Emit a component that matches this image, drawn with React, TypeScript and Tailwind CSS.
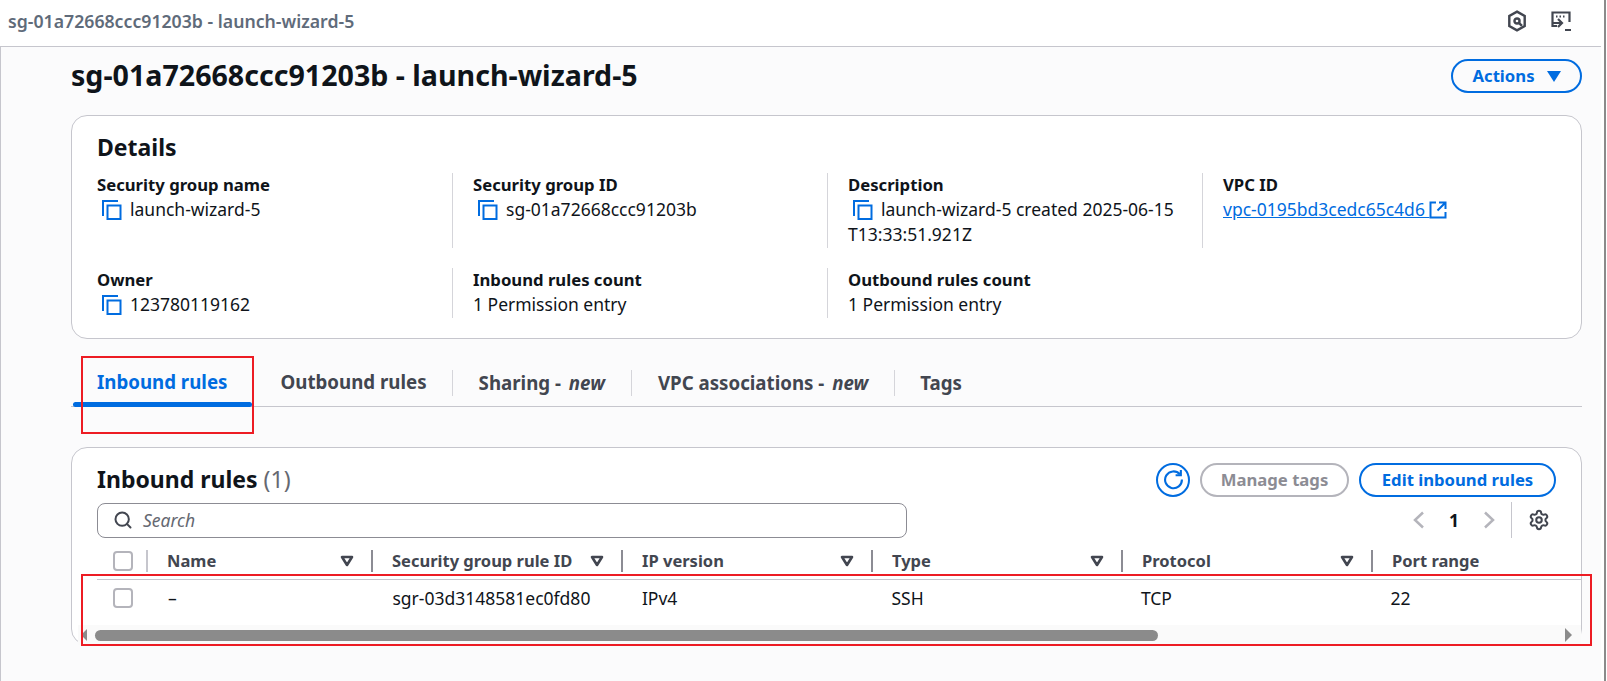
import { Search, Settings } from 'lucide-react';

const COLUMNS = [
  { label: 'Name', value: '–', width: 'w-[225px]', sort: true, divider: 'border-[#c6c6cd]' },
  { label: 'Security group rule ID', value: 'sgr-03d3148581ec0fd80', width: 'w-[250px]', sort: true, divider: 'border-[#8c8c94]' },
  { label: 'IP version', value: 'IPv4', width: 'w-[250px]', sort: true, divider: 'border-[#8c8c94]' },
  { label: 'Type', value: 'SSH', width: 'w-[250px]', sort: true, divider: 'border-[#8c8c94]' },
  { label: 'Protocol', value: 'TCP', width: 'w-[250px]', sort: true, divider: 'border-[#8c8c94]' },
  { label: 'Port range', value: '22', width: 'w-[188px]', sort: false, divider: 'border-[#8c8c94]' },
];

function CopyIcon() {
  return (
    <svg width="20" height="20" viewBox="0 0 20 20" fill="none" stroke="#006ce0" strokeWidth="2" className="shrink-0">
      <path d="M1 16V1h15" />
      <rect x="5.5" y="5.5" width="13" height="13.5" />
    </svg>
  );
}

function ExternalIcon() {
  return (
    <svg width="18" height="18" viewBox="0 0 18 18" fill="none" stroke="#006ce0" strokeWidth="2" className="shrink-0">
      <path d="M7 1.500H1.500v15h15V11" />
      <path d="M10 1.500h6.500V8M16 2L8.500 9.500" />
    </svg>
  );
}

function Caret() {
  return (
    <svg width="14" height="12" viewBox="0 0 14 12" fill="none" stroke="#424650" strokeWidth="2.600" className="shrink-0">
      <path d="M2 2h10L7 10z" strokeLinejoin="round" />
    </svg>
  );
}

function Chevron({ flip }: { flip?: boolean }) {
  return (
    <svg width="22" height="22" viewBox="0 0 22 22" fill="none" stroke="#b4b4bb" strokeWidth="2.500" className="shrink-0">
      <path d={flip ? 'M7 3.500l8 7.500-8 7.500' : 'M15 3.500L7 11l8 7.500'} />
    </svg>
  );
}

function Field({ label, first, children }: { label: string; first?: boolean; children: React.ReactNode }) {
  return (
    <div className={first ? 'pb-px pr-5' : 'border-l border-[#d5d5da] pb-px pl-5 pr-5'}>
      <div className="text-[16.700px] font-bold leading-[23px] text-[#0f141a]">{label}</div>
      <div className="pt-px leading-[25px] text-[#0f141a]">{children}</div>
    </div>
  );
}

function CopyValue({ text }: { text: string }) {
  return (
    <span className="flex items-center gap-2 pl-[5px]">
      <CopyIcon />
      <span className="whitespace-nowrap">{text}</span>
    </span>
  );
}

export default function App() {
  return (
    <div className="relative h-[681px] w-[1607px] overflow-hidden bg-white font-['Noto_Sans',sans-serif] text-[17.500px]">
      <div className="flex h-[46px] items-center justify-between pb-1 pl-2 pr-[35px]">
        <span className="text-[17.700px] font-semibold text-[#5f6b7a]">sg-01a72668ccc91203b - launch-wizard-5</span>
        <div className="flex items-center gap-6 text-[#424650]">
          <svg width="20" height="22" viewBox="0 0 18 20" fill="none" stroke="currentColor" strokeWidth="2.200">
            <path d="M9 1.500l7 4v9l-7 4-7-4v-9z" />
            <circle cx="9" cy="10" r="2.300" />
            <path d="M10.500 11.500l3 3" />
          </svg>
          <svg width="21" height="21" viewBox="0 0 21 21" fill="none" stroke="currentColor" strokeWidth="2.200">
            <path d="M6 15H1.500V1.500h17V11" />
            <path d="M5 5.500h1.500M8.500 5.500h1.500M12 5.500h1.500" />
            <path d="M7 8l4 4-4 4M2 12h8M14 19h6" />
          </svg>
        </div>
      </div>

      <div className="mr-[6px] h-[635px] border-l border-t border-[#c6c6cd] bg-[#fbfbfc] pl-[70px] pr-[19px]">
        <div className="flex h-[68px] items-start justify-between pt-3">
          <h1 className="text-[28.600px] font-bold leading-[32px] text-[#0f141a]">sg-01a72668ccc91203b - launch-wizard-5</h1>
          <button className="flex h-[34px] w-[131px] items-center justify-center gap-3 rounded-full border-2 border-[#006ce0] text-[16.700px] font-bold text-[#006ce0]">
            Actions
            <svg width="14" height="11" viewBox="0 0 14 11" fill="#006ce0"><path d="M0 0h14L7 11z" /></svg>
          </button>
        </div>

        <section className="h-[224px] rounded-2xl border border-[#c6c6cd] bg-white pl-[25px] pt-4">
          <h2 className="mb-[11px] text-[23px] font-bold leading-[30px] text-[#0f141a]">Details</h2>
          <div className="grid grid-cols-[355px_375px_375px_1fr] gap-y-5">
            <Field label="Security group name" first><CopyValue text="launch-wizard-5" /></Field>
            <Field label="Security group ID"><CopyValue text="sg-01a72668ccc91203b" /></Field>
            <Field label="Description">
              <CopyValue text="launch-wizard-5 created 2025-06-15" />
              T13:33:51.921Z
            </Field>
            <Field label="VPC ID">
              <span className="flex items-center">
                <a className="whitespace-pre text-[#006ce0] underline">vpc-0195bd3cedc65c4d6 </a>
                <ExternalIcon />
              </span>
            </Field>
            <Field label="Owner" first><CopyValue text="123780119162" /></Field>
            <Field label="Inbound rules count">1 Permission entry</Field>
            <Field label="Outbound rules count">1 Permission entry</Field>
          </div>
        </section>

        <nav className="mt-[18px] flex h-[50px] items-center border-b border-[#c6c6cd] pt-[2px] text-[18.700px] font-bold text-[#424650]">
          <div className="relative flex h-full items-center px-[26px] text-[#006ce0]">
            Inbound rules
            <div className="absolute bottom-[-1px] left-[2px] h-[5px] w-[179px] rounded bg-[#006ce0]" />
          </div>
          <div className="pl-[27px] pr-[25px]">Outbound rules</div>
          <div className="border-l border-[#d5d5da] px-[26px] leading-[26px]">Sharing - <em className="ml-[3px]">new</em></div>
          <div className="border-l border-[#d5d5da] px-[26px] leading-[26px]">VPC associations - <em className="ml-[3px]">new</em></div>
          <div className="border-l border-[#d5d5da] px-[25px] leading-[26px]">Tags</div>
        </nav>

        <section className="relative mt-10 h-[198px] rounded-2xl border border-[#c6c6cd] bg-white px-[25px] pt-[14px]">
          <div className="flex h-[35px] items-center justify-between">
            <h2 className="text-[23px] font-bold text-[#0f141a]">Inbound rules <span className="font-normal text-[#656871]">(1)</span></h2>
            <div className="flex items-center gap-[10px]">
              <button className="flex size-[34px] items-center justify-center rounded-full border-2 border-[#006ce0]">
                <svg width="21" height="21" viewBox="0 0 20 20" fill="none" stroke="#006ce0" strokeWidth="2">
                  <path d="M16 5a8 8 0 1 0 2 5" />
                  <path d="M17 1v5h-5" />
                </svg>
              </button>
              <button className="h-[34px] w-[149px] rounded-full border-2 border-[#b4b4bb] text-[16.700px] font-bold text-[#8c8c94]">Manage tags</button>
              <button className="h-[34px] w-[197px] rounded-full border-2 border-[#006ce0] text-[16.700px] font-bold text-[#006ce0]">Edit inbound rules</button>
            </div>
          </div>
          <div className="mt-[5px] flex h-[36px] items-center justify-between">
            <div className="flex h-[35px] w-[810px] items-center gap-[10px] rounded-lg border border-[#8c8c94] bg-white pl-[15px]">
              <Search size={20} strokeWidth={2.400} className="text-[#424650]" />
              <span className="italic text-[#656871]">Search</span>
            </div>
            <div className="flex h-full items-center pr-[6px]">
              <Chevron />
              <span className="w-12 text-center font-bold text-[#0f141a]">1</span>
              <Chevron flip />
              <div className="ml-[11px] mr-4 h-full border-l border-[#c6c6cd]" />
              <Settings size={22} strokeWidth={2.200} className="text-[#424650]" />
            </div>
          </div>
          <div className="-mr-[25px] mt-3 flex h-[30px] items-start border-b border-[#c6c6cd]">
            <div className="flex h-[22px] w-[49px] items-center pl-4">
              <div className="size-5 rounded border-2 border-[#b4b4bb]" />
            </div>
            {COLUMNS.map(c => (
              <div key={c.label} className={`${c.width} ${c.divider} flex h-[22px] items-center justify-between border-l-2 pl-[19px] pr-[17px] text-[16.500px] font-bold text-[#424650]`}>
                <span className="whitespace-nowrap">{c.label}</span>
                {c.sort && <Caret />}
              </div>
            ))}
          </div>
          <div className="flex h-[36px] items-center text-[#0f141a]">
            <div className="w-[49px] pl-4">
              <div className="size-5 rounded border-2 border-[#b4b4bb]" />
            </div>
            {COLUMNS.map(c => (
              <div key={c.label} className={`${c.width} pl-[22px]`}>{c.value}</div>
            ))}
          </div>
        </section>
      </div>

      {/* scrollbar sits over the card bottom */}
      <div className="absolute left-[78px] top-[625px] flex h-[20px] w-[1503px] items-center bg-[#fafafa]">
        <svg width="8" height="12" viewBox="0 0 8 12" fill="#8b8b8b" className="absolute left-[1px]"><path d="M8 0v12L2 6z" /></svg>
        <div className="ml-[17px] h-[11px] w-[1063px] rounded-full bg-[#8b8b8b]" />
        <svg width="8" height="14" viewBox="0 0 8 14" fill="#8b8b8b" className="absolute right-[8px]"><path d="M0 0v14l7-7z" /></svg>
      </div>

      {/* window edge */}
      <div className="absolute right-[1px] top-0 h-full w-[2px] bg-[#8b8b8b]" />

      {/* red annotation boxes */}
      <div className="absolute left-[81px] top-[356px] h-[78px] w-[173px] border-2 border-[#ed1c24]" />
      <div className="absolute left-[81px] top-[574px] h-[72px] w-[1511px] border-2 border-[#ed1c24]" />
    </div>
  );
}
